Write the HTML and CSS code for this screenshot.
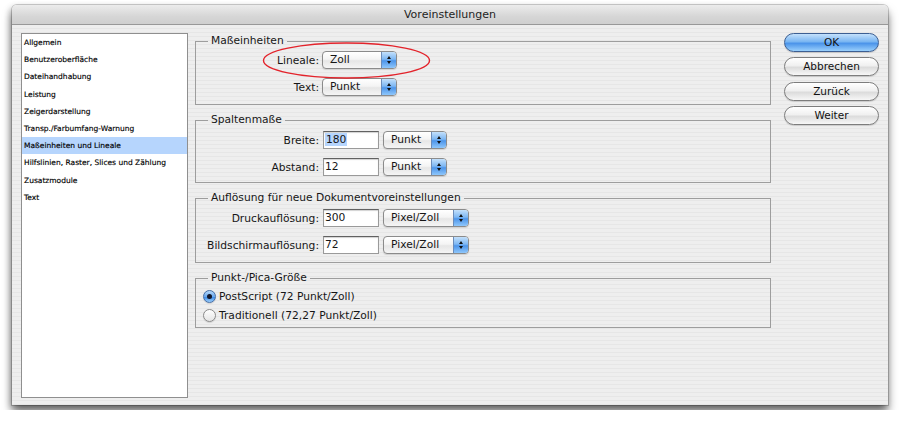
FILE: index.html
```html
<!DOCTYPE html>
<html lang="de">
<head>
<meta charset="utf-8">
<title>Voreinstellungen</title>
<link rel="stylesheet" href="styles.css">
</head>
<body>
<div class="window">
  <div class="titlebar">Voreinstellungen</div>
  <div class="content">
    <ul class="sidebar">
      <li>Allgemein</li>
      <li>Benutzeroberfläche</li>
      <li>Dateihandhabung</li>
      <li>Leistung</li>
      <li>Zeigerdarstellung</li>
      <li>Transp./Farbumfang-Warnung</li>
      <li class="selected">Maßeinheiten und Lineale</li>
      <li>Hilfslinien, Raster, Slices und Zählung</li>
      <li>Zusatzmodule</li>
      <li>Text</li>
    </ul>

    <div class="main">
      <fieldset class="group g1">
        <legend>Maßeinheiten</legend>
        <div class="rows">
          <svg class="mark" width="171" height="39" viewBox="0 0 171 39"><ellipse cx="85.5" cy="19.5" rx="83" ry="17.5" fill="none" stroke="#e3232b" stroke-width="1.4"/></svg>
          <span class="label">Lineale:</span>
          <div class="popup w75"><span class="popup-text">Zoll</span><span class="arrows"><i class="up"></i><i class="down"></i></span></div>
          <span class="label">Text:</span>
          <div class="popup w75"><span class="popup-text">Punkt</span><span class="arrows"><i class="up"></i><i class="down"></i></span></div>
        </div>
      </fieldset>

      <fieldset class="group g2">
        <legend>Spaltenmaße</legend>
        <div class="rows">
          <span class="label">Breite:</span>
          <div class="field"><span class="sel">180</span></div>
          <div class="popup w64"><span class="popup-text">Punkt</span><span class="arrows"><i class="up"></i><i class="down"></i></span></div>
          <span class="label">Abstand:</span>
          <div class="field">12</div>
          <div class="popup w64"><span class="popup-text">Punkt</span><span class="arrows"><i class="up"></i><i class="down"></i></span></div>
        </div>
      </fieldset>

      <fieldset class="group g3">
        <legend>Auflösung für neue Dokumentvoreinstellungen</legend>
        <div class="rows">
          <span class="label">Druckauflösung:</span>
          <div class="field">300</div>
          <div class="popup w86"><span class="popup-text">Pixel/Zoll</span><span class="arrows"><i class="up"></i><i class="down"></i></span></div>
          <span class="label">Bildschirmauflösung:</span>
          <div class="field">72</div>
          <div class="popup w86"><span class="popup-text">Pixel/Zoll</span><span class="arrows"><i class="up"></i><i class="down"></i></span></div>
        </div>
      </fieldset>

      <fieldset class="group g4">
        <legend>Punkt-/Pica-Größe</legend>
        <div class="radios">
          <div class="radio-row"><span class="radio on"><i></i></span><span>PostScript (72 Punkt/Zoll)</span></div>
          <div class="radio-row"><span class="radio"></span><span>Traditionell (72,27 Punkt/Zoll)</span></div>
        </div>
      </fieldset>
    </div>

    <div class="buttons">
      <div class="btn default">OK</div>
      <div class="btn">Abbrechen</div>
      <div class="btn">Zurück</div>
      <div class="btn">Weiter</div>
    </div>
  </div>
</div>
</body>
</html>
```

FILE: styles.css
```css
* { box-sizing: border-box; }

body {
  margin: 0;
  padding: 5px 12px;
  background: #ffffff;
  font-family: "DejaVu Sans", "Liberation Sans", sans-serif;
  color: #161616;
}

.window {
  width: 876px;
  height: 400px;
  border-radius: 5px 5px 0 0;
  background: repeating-linear-gradient(to bottom, #eeeeee 0, #eeeeee 3px, #e6e6e6 3px, #e6e6e6 4px);
  box-shadow: 0 0 0 1px rgba(0,0,0,0.18), 0 7px 10px rgba(0,0,0,0.55), -2px 2px 6px rgba(0,0,0,0.2);
  display: flex;
  flex-direction: column;
}

.titlebar {
  height: 20px;
  border-radius: 5px 5px 0 0;
  background: linear-gradient(to bottom, #ececec, #d6d6d6 60%, #cfcfcf);
  border-bottom: 1px solid #989898;
  text-align: center;
  font-size: 11px;
  line-height: 20px;
  color: #1e1e1e;
}

.content {
  flex: 1;
  display: flex;
  padding: 8px 9px 7px 9px;
  gap: 7px;
}

.sidebar {
  list-style: none;
  margin: 0;
  padding: 0;
  width: 167px;
  height: 365px;
  background: #ffffff;
  border: 1px solid #8f8f8f;
  font-size: 7.5px;
  color: #000000;
}

.sidebar li {
  height: 17.2px;
  line-height: 17.2px;
  padding-left: 2px;
  white-space: nowrap;
  -webkit-text-stroke: 0.15px #000;
}

.sidebar li.selected { background: #b6d5fd; }

.main {
  width: 576px;
  display: flex;
  flex-direction: column;
  gap: 7px;
}

.group {
  margin: 0;
  padding: 2px 0 8px 0;
  border: 1px solid #9d9d9d;
  min-width: 0;
}

.group legend {
  margin-left: 12px;
  padding: 0 3px;
  font-size: 10.7px;
  line-height: 16px;
}

.g2, .g3 { padding-top: 3px; }
.g2 { padding-bottom: 6px; }
.g4 { padding: 2px 0 4px 0; }

.rows {
  position: relative;
  display: grid;
  grid-template-columns: 123px auto auto 1fr;
  grid-auto-rows: 18px;
  column-gap: 4px;
  row-gap: 9px;
  align-items: center;
  font-size: 10.7px;
}

.g1 .rows { grid-template-columns: 123px auto 1fr; column-gap: 3px; }

.label { grid-column: 1; text-align: right; white-space: nowrap; }

.mark {
  position: absolute;
  left: 65px;
  top: -10px;
  pointer-events: none;
}

.popup {
  height: 18px;
  display: flex;
  border: 1px solid #8b8b8b;
  border-radius: 4px;
  background: linear-gradient(to bottom, #ffffff 0%, #f4f4f4 45%, #e6e6e6 55%, #f5f5f5 100%);
  box-shadow: 0 1px 1px rgba(0,0,0,0.12);
}
.w75 { width: 75px; }
.w64 { width: 64px; }
.w86 { width: 86px; }

.popup-text {
  flex: 1;
  padding-left: 7px;
  line-height: 16px;
  white-space: nowrap;
}

.arrows {
  width: 15px;
  border-left: 1px solid #6b8cba;
  border-radius: 0 3px 3px 0;
  background: linear-gradient(to bottom, #c3e0fb 0%, #7db7f3 45%, #4d95ea 55%, #8fc7fb 100%);
  display: flex;
  flex-direction: column;
  align-items: center;
  justify-content: center;
  gap: 2px;
}
.arrows .up {
  border-left: 2.5px solid transparent;
  border-right: 2.5px solid transparent;
  border-bottom: 3px solid #111;
}
.arrows .down {
  border-left: 2.5px solid transparent;
  border-right: 2.5px solid transparent;
  border-top: 3px solid #111;
}

.field {
  width: 56px;
  height: 18px;
  background: #ffffff;
  border: 1px solid #9a9a9a;
  border-top-color: #616161;
  box-shadow: inset 0 1px 1px rgba(0,0,0,0.18);
  padding-left: 1px;
  line-height: 16px;
}
.sel { background: #b6d5fd; padding: 0 1px; }

.radios {
  display: flex;
  flex-direction: column;
  gap: 3px;
  padding-left: 7px;
  font-size: 10.7px;
}
.radio-row {
  height: 16px;
  display: flex;
  align-items: center;
  gap: 3px;
}
.radio {
  width: 13px;
  height: 13px;
  border-radius: 50%;
  border: 1px solid #8a8a8a;
  background: linear-gradient(to bottom, #ffffff, #e4e4e4);
  display: flex;
  align-items: center;
  justify-content: center;
  box-shadow: 0 1px 1px rgba(0,0,0,0.12);
}
.radio.on {
  border-color: #466ea6;
  background: linear-gradient(to bottom, #b8dafb 0%, #6aa9ef 50%, #3d8be8 55%, #9ccffb 100%);
}
.radio.on i {
  width: 5px;
  height: 5px;
  border-radius: 50%;
  background: #14182a;
}

.buttons {
  width: 95px;
  margin-left: 6px;
  display: flex;
  flex-direction: column;
  gap: 5.3px;
}
.btn {
  height: 19px;
  border: 1px solid #7d7d7d;
  border-radius: 10px;
  background: linear-gradient(to bottom, #ffffff 0%, #f0f0f0 45%, #dcdcdc 55%, #f7f7f7 100%);
  box-shadow: 0 1px 1px rgba(0,0,0,0.15);
  text-align: center;
  font-size: 10.5px;
  line-height: 17px;
  color: #111;
}
.btn.default {
  border-color: #3c5f93;
  background: linear-gradient(to bottom, #c4e1fc 0%, #7ab6f2 45%, #4b94ea 55%, #9ad0fc 100%);
}
```
